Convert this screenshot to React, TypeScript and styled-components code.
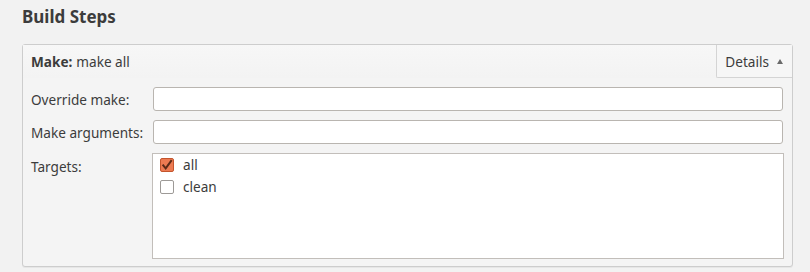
import React, { useState } from "react";
import styled, { createGlobalStyle } from "styled-components";

const GlobalStyle = createGlobalStyle`
  html, body {
    margin: 0;
    padding: 0;
    background: #f2f2f2;
  }
  body {
    font-family: "Noto Sans", "DejaVu Sans", sans-serif;
    font-size: 13.6px;
    color: #3c3c3c;
  }
`;

const Page = styled.div`
  width: 810px;
  height: 272px;
  padding: 5px 17px 0 22px;
  box-sizing: border-box;
`;

const Title = styled.h2`
  margin: 0 0 15px;
  font-size: 17px;
  font-weight: 700;
  line-height: 24px;
  color: #3c3c3c;
`;

const Panel = styled.div`
  border: 1px solid #cdcdcd;
  border-radius: 3px;
  background: #f4f4f4;
  box-shadow: 0 1px 0 #e6e6e6;
`;

const Header = styled.div`
  display: flex;
  align-items: stretch;
  height: 33px;
  background: linear-gradient(#f7f7f7, #f3f3f3);
`;

const Summary = styled.div`
  flex: 1;
  display: flex;
  align-items: center;
  padding-left: 8px;
  b {
    font-weight: 700;
    margin-right: 4px;
  }
`;

const DetailsButton = styled.button`
  display: flex;
  align-items: center;
  gap: 8px;
  padding: 0 9px 0 8px;
  border: none;
  border-left: 1px solid #d4d4d4;
  border-bottom: 1px solid #d4d4d4;
  border-bottom-left-radius: 2px;
  background: #f6f6f6;
  font: inherit;
  color: #3c3c3c;
`;

const Arrow = styled.span`
  width: 0;
  height: 0;
  border-left: 3.5px solid transparent;
  border-right: 3.5px solid transparent;
  border-bottom: 5px solid #6a6a6a;
  margin-top: 1px;
`;

const Form = styled.div`
  display: grid;
  grid-template-columns: 121px 1fr;
  row-gap: 9px;
  padding: 9px 8px 7px 8px;
`;

const Label = styled.label<{ $top?: boolean }>`
  display: flex;
  align-items: ${(p) => (p.$top ? "flex-start" : "center")};
  padding-top: ${(p) => (p.$top ? "4px" : "0")};
  white-space: nowrap;
`;

const TextInput = styled.input`
  height: 24px;
  box-sizing: border-box;
  margin-left: 1px;
  margin-right: 1px;
  border: 1px solid #b9b5b0;
  border-radius: 3px;
  background: #fff;
  outline: none;
`;

const List = styled.div`
  height: 106px;
  box-sizing: border-box;
  border: 1px solid #c2beba;
  background: #fff;
  padding: 3px 7px;
  display: flex;
  flex-direction: column;
  gap: 7px;
`;

const Item = styled.label`
  display: flex;
  align-items: center;
  gap: 9px;
  height: 15px;
`;

const Box = styled.span<{ $checked: boolean }>`
  width: 14px;
  height: 14px;
  box-sizing: border-box;
  border-radius: 2px;
  border: 1px solid ${(p) => (p.$checked ? "#c4552d" : "#9d9a97")};
  background: ${(p) => (p.$checked ? "#ec7a52" : "#fff")};
  display: flex;
  align-items: center;
  justify-content: center;
`;

const Check = () => (
  <svg width="12" height="12" viewBox="0 0 11 11">
    <path d="M1.5 5.2 L4.3 8.6 L9.8 1" fill="none" stroke="#5b2a18" strokeWidth="1.8" />
  </svg>
);

export default function App() {
  const [targets, setTargets] = useState({ all: true, clean: false });
  const toggle = (k: "all" | "clean") => setTargets({ ...targets, [k]: !targets[k] });
  return (
    <Page>
      <GlobalStyle />
      <Title>Build Steps</Title>
      <Panel>
        <Header>
          <Summary>
            <b>Make:</b> make all
          </Summary>
          <DetailsButton>
            Details <Arrow />
          </DetailsButton>
        </Header>
        <Form>
          <Label>Override make:</Label>
          <TextInput />
          <Label>Make arguments:</Label>
          <TextInput />
          <Label $top>Targets:</Label>
          <List>
            {(["all", "clean"] as const).map((k) => (
              <Item key={k} onClick={() => toggle(k)}>
                <Box $checked={targets[k]}>{targets[k] && <Check />}</Box>
                {k}
              </Item>
            ))}
          </List>
        </Form>
      </Panel>
    </Page>
  );
}
